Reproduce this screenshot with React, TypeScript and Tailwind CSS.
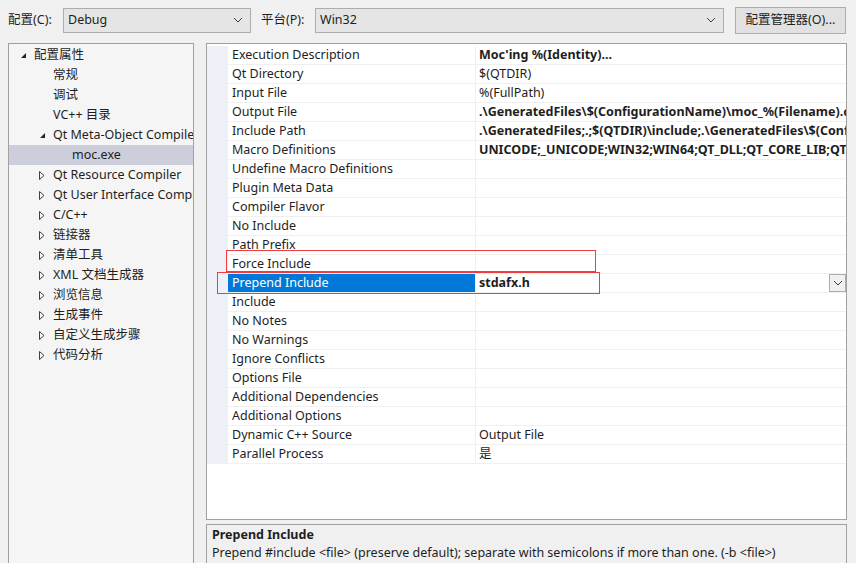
import React from 'react';

const FONT = { fontFamily: '"Noto Sans", "Noto Sans CJK SC", sans-serif' };

type TreeItem = { label: string; level: number; state?: 'open' | 'closed'; selected?: boolean };

const treeItems: TreeItem[] = [
  { label: '配置属性', level: 0, state: 'open' },
  { label: '常规', level: 1 },
  { label: '调试', level: 1 },
  { label: 'VC++ 目录', level: 1 },
  { label: 'Qt Meta-Object Compiler', level: 1, state: 'open' },
  { label: 'moc.exe', level: 2, selected: true },
  { label: 'Qt Resource Compiler', level: 1, state: 'closed' },
  { label: 'Qt User Interface Compiler', level: 1, state: 'closed' },
  { label: 'C/C++', level: 1, state: 'closed' },
  { label: '链接器', level: 1, state: 'closed' },
  { label: '清单工具', level: 1, state: 'closed' },
  { label: 'XML 文档生成器', level: 1, state: 'closed' },
  { label: '浏览信息', level: 1, state: 'closed' },
  { label: '生成事件', level: 1, state: 'closed' },
  { label: '自定义生成步骤', level: 1, state: 'closed' },
  { label: '代码分析', level: 1, state: 'closed' },
];

type Prop = { name: string; value?: string; bold?: boolean; selected?: boolean };

const props: Prop[] = [
  { name: 'Execution Description', value: "Moc'ing %(Identity)...", bold: true },
  { name: 'Qt Directory', value: '$(QTDIR)' },
  { name: 'Input File', value: '%(FullPath)' },
  { name: 'Output File', value: '.\\GeneratedFiles\\$(ConfigurationName)\\moc_%(Filename).cpp', bold: true },
  { name: 'Include Path', value: '.\\GeneratedFiles;.;$(QTDIR)\\include;.\\GeneratedFiles\\$(ConfigurationName)', bold: true },
  { name: 'Macro Definitions', value: 'UNICODE;_UNICODE;WIN32;WIN64;QT_DLL;QT_CORE_LIB;QT_GUI_LIB', bold: true },
  { name: 'Undefine Macro Definitions' },
  { name: 'Plugin Meta Data' },
  { name: 'Compiler Flavor' },
  { name: 'No Include' },
  { name: 'Path Prefix' },
  { name: 'Force Include' },
  { name: 'Prepend Include', value: 'stdafx.h', bold: true, selected: true },
  { name: 'Include' },
  { name: 'No Notes' },
  { name: 'No Warnings' },
  { name: 'Ignore Conflicts' },
  { name: 'Options File' },
  { name: 'Additional Dependencies' },
  { name: 'Additional Options' },
  { name: 'Dynamic C++ Source', value: 'Output File' },
  { name: 'Parallel Process', value: '是' },
];

const Chevron = () => (
  <svg width="10" height="6" viewBox="0 0 10 6" fill="none">
    <path d="M1 1 L5 5 L9 1" stroke="#404040" strokeWidth="1" />
  </svg>
);

const Combo = ({ value, width }: { value: string; width: string }) => (
  <div className={`${width} h-[25px] flex items-center justify-between bg-[#e5e5e5] border border-[#adadad] pl-[4px] pr-[7px] text-[#1e1e1e]`}>
    <span>{value}</span>
    <Chevron />
  </div>
);

const Arrow = ({ state }: { state?: 'open' | 'closed' }) => {
  if (state === 'open')
    return (
      <svg width="7" height="7" viewBox="0 0 7 7">
        <path d="M6 1 L6 6 L1 6 Z" fill="#262626" />
      </svg>
    );
  if (state === 'closed')
    return (
      <svg width="6" height="9" viewBox="0 0 6 9">
        <path d="M0.5 0.5 L5 4.5 L0.5 8.5 Z" fill="none" stroke="#404040" strokeWidth="1" />
      </svg>
    );
  return null;
};

const levelPad = ['pl-[11px]', 'pl-[30px]', 'pl-[49px]'];

export default function App() {
  return (
    <div style={FONT} className="w-[856px] h-[563px] bg-[#f0f0f0] overflow-hidden text-[#1e1e1e] text-[12.5px]">
      {/* Top bar */}
      <div className="flex items-center h-[40px] pl-[8px]">
        <span className="w-[55px]">配置(C):</span>
        <Combo value="Debug" width="w-[188px]" />
        <span className="ml-[10px] w-[54px]">平台(P):</span>
        <Combo value="Win32" width="w-[409px]" />
        <button className="ml-[11px] w-[111px] h-[27px] bg-[#e1e1e1] border border-[#adadad]">
          配置管理器(O)...
        </button>
      </div>

      <div className="flex pl-[8px] mt-[3px]">
        {/* Tree */}
        <div className="w-[186px] h-[530px] pt-[1px] bg-[#f5f5f5] border border-[#a0a0a0] overflow-hidden">
          {treeItems.map((item) => (
            <div
              key={item.label}
              className={`h-[20px] flex items-center whitespace-nowrap overflow-hidden ${levelPad[item.level]} ${item.selected ? 'bg-[#cccedb]' : ''}`}
            >
              <span className="w-[14px] shrink-0 flex items-center">
                <Arrow state={item.state} />
              </span>
              <span className="shrink-0">{item.label}</span>
            </div>
          ))}
        </div>

        <div className="ml-[12px] w-[641px] flex flex-col">
          {/* Property grid */}
          <div className="relative h-[477px] pt-[2px] bg-white border border-[#a0a0a0] overflow-hidden">
            {props.map((p) => (
              <div key={p.name} className="flex h-[19px]">
                <div className="w-[21px] bg-[#eef0f7]" />
                <div
                  className={`w-[247px] pl-[4px] flex items-center border-b border-[#f0f0f0] whitespace-nowrap ${
                    p.selected ? 'bg-[#0078d7] text-white' : ''
                  }`}
                >
                  {p.name}
                </div>
                <div className="flex-1 min-w-0 flex items-center border-b border-l border-[#f0f0f0] pl-[3px] whitespace-nowrap overflow-hidden">
                  <span className={`flex-1 overflow-hidden ${p.bold ? 'font-bold' : ''}`}>{p.value}</span>
                  {p.selected && (
                    <span className="w-[17px] h-[18px] flex items-center justify-center bg-[#f0f0f0] border border-[#adadad]">
                      <Chevron />
                    </span>
                  )}
                </div>
              </div>
            ))}
            {/* annotation boxes */}
            <div className="absolute left-[19px] top-[206px] w-[370px] h-[22px] border border-[#f03c3c]" />
            <div className="absolute left-[10px] top-[228px] w-[383px] h-[22px] border border-[#f03c3c]" />
          </div>

          {/* Description */}
          <div className="mt-[4px] h-[60px] border border-[#a0a0a0] bg-[#f0f0f0] px-[5px] pt-[1px]">
            <div className="font-bold leading-[18px]">Prepend Include</div>
            <div className="leading-[18px]">
              Prepend #include &lt;file&gt; (preserve default); separate with semicolons if more than one. (-b &lt;file&gt;)
            </div>
          </div>
        </div>
      </div>
    </div>
  );
}
